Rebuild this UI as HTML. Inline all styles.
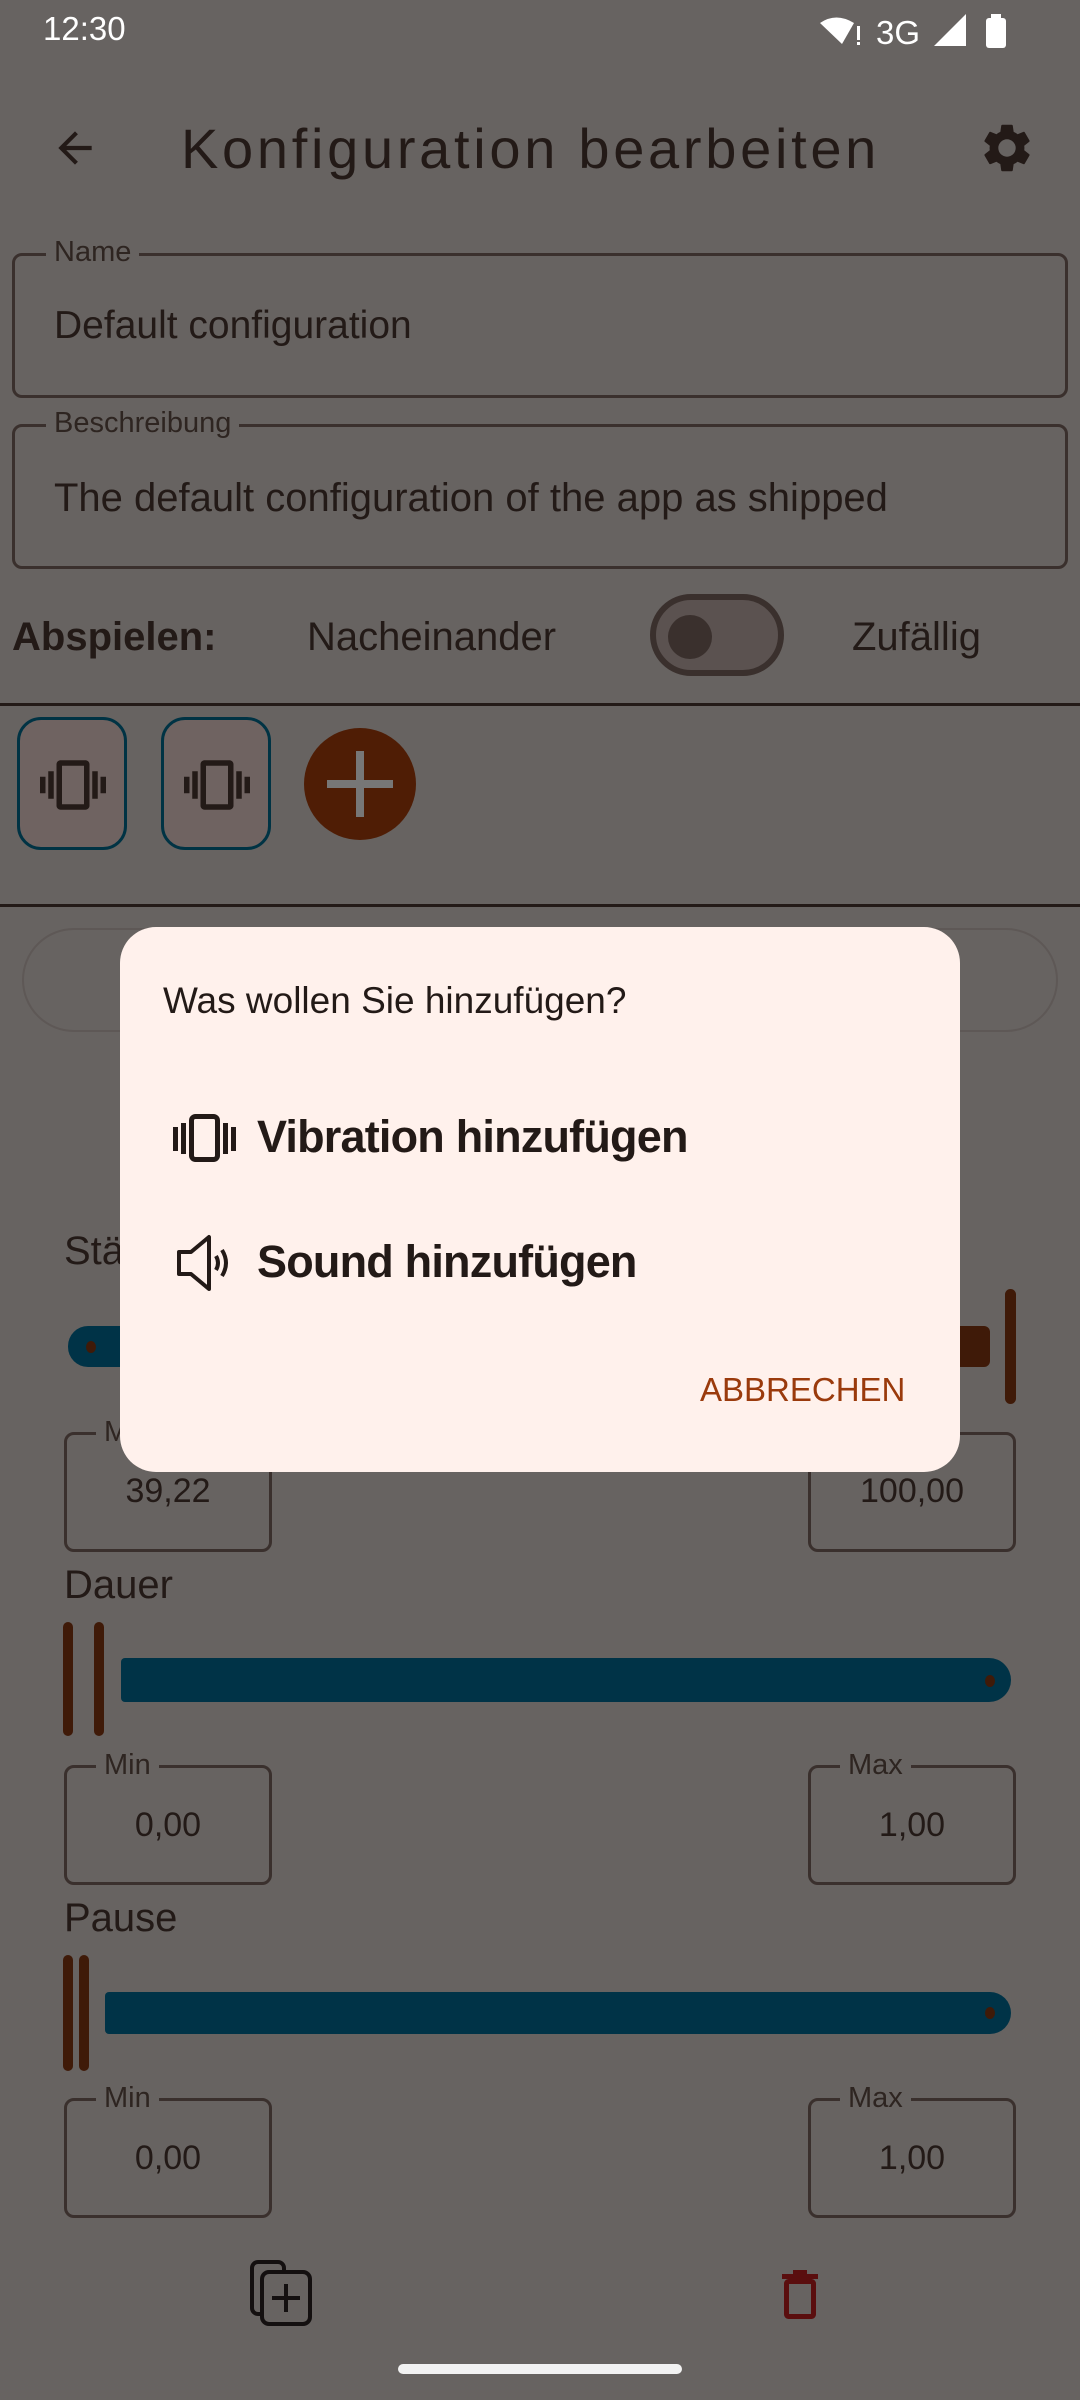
<!DOCTYPE html>
<html><head><meta charset="utf-8"><style>
*{margin:0;padding:0;box-sizing:border-box}
body{width:1080px;height:2400px;background:#676361;position:relative;overflow:hidden;font-family:"Liberation Sans",sans-serif;color:#231a17}
.a{position:absolute;white-space:nowrap}
.box{position:absolute;border:3px solid #3a302d;border-radius:10px}
.lbl{position:absolute;background:#676361;padding:0 8px;font-size:29px;color:#2e2521;line-height:34px}
.bar{position:absolute;background:#3f1a08;border-radius:6px}
.trk{position:absolute;background:#003347}
</style></head><body>
<div class="a" style="left:43px;top:10px;font-size:33px;color:#fff">12:30</div>
<svg class="a" style="left:818px;top:14px" width="200" height="34" viewBox="0 0 200 34">
<path d="M2 9 Q18 -2 36 9 L24 30 Z" fill="#fff"/><rect x="39" y="12" width="3" height="14" fill="#fff"/><rect x="39" y="28" width="3" height="3" fill="#fff"/>
<text x="58" y="30" font-size="33" fill="#fff" font-family="Liberation Sans">3G</text>
<path d="M116 32 L148 32 L148 0 Z" fill="#fff"/>
<rect x="168" y="4" width="20" height="30" rx="3" fill="#fff"/><rect x="173" y="0" width="10" height="5" fill="#fff"/>
</svg>
<svg class="a" style="left:50px;top:123px" width="50" height="50" viewBox="0 0 24 24"><path d="M20 11H7.8l5.6-5.6L12 4l-8 8 8 8 1.4-1.4L7.8 13H20z" fill="#231a17"/></svg>
<div class="a" style="left:181px;top:114px;font-size:56px;line-height:70px;color:#231a17;letter-spacing:3.7px">Konfiguration bearbeiten</div>
<svg class="a" style="left:978px;top:119px" width="58" height="58" viewBox="0 0 24 24"><path fill="#231a17" d="M19.14 12.94c.04-.3.06-.61.06-.94 0-.32-.02-.64-.07-.94l2.03-1.58a.49.49 0 00.12-.61l-1.920-3.32a.49.49 0 00-.59-.22l-2.39.96c-.5-.38-1.030-.7-1.62-.94l-.36-2.54a.48.48 0 00-.48-.41h-3.84a.48.48 0 00-.47.41l-.36 2.54c-.59.24-1.13.57-1.62.94l-2.39-.96a.48.48 0 00-.59.22L2.74 8.87a.47.47 0 00.12.61l2.03 1.58c-.05.3-.09.63-.09.94s.02.64.07.94l-2.03 1.58a.49.49 0 00-.12.61l1.92 3.32c.12.22.37.29.59.22l2.39-.96c.5.38 1.03.7 1.62.94l.36 2.54c.05.24.24.41.48.41h3.84c.24 0 .44-.17.47-.41l.36-2.54c.59-.24 1.13-.56 1.62-.94l2.39.96c.22.08.47 0 .59-.22l1.92-3.32a.47.47 0 00-.12-.61l-2.01-1.58zM12 15.6A3.6 3.6 0 1112 8.4a3.6 3.6 0 010 7.2z"/></svg>

<div class="box" style="left:12px;top:253px;width:1056px;height:145px"></div>
<div class="lbl" style="left:46px;top:235px">Name</div>
<div class="a" style="left:54px;top:301px;font-size:39px;line-height:50px">Default configuration</div>
<div class="box" style="left:12px;top:424px;width:1056px;height:145px"></div>
<div class="lbl" style="left:46px;top:406px">Beschreibung</div>
<div class="a" style="left:54px;top:473px;font-size:40px;line-height:50px">The default configuration of the app as shipped</div>

<div class="a" style="left:12px;top:612px;font-size:40px;line-height:50px;font-weight:bold">Abspielen:</div>
<div class="a" style="left:307px;top:612px;font-size:40px;line-height:50px">Nacheinander</div>
<div class="a" style="left:650px;top:594px;width:134px;height:82px;border:6px solid #3a302d;border-radius:41px;background:#5b5250"></div>
<div class="a" style="left:668px;top:615px;width:44px;height:44px;border-radius:50%;background:#3a302d"></div>
<div class="a" style="left:852px;top:612px;font-size:40px;line-height:50px">Zufällig</div>

<div class="a" style="left:0;top:703px;width:1080px;height:3px;background:#231a17"></div>
<div class="a" style="left:17px;top:717px;width:110px;height:133px;border:3px solid #003344;border-radius:24px;background:#6f6361"></div>
<div class="a" style="left:161px;top:717px;width:110px;height:133px;border:3px solid #003344;border-radius:24px;background:#6f6361"></div>
<svg class="a" style="left:40px;top:752px" width="66" height="66" viewBox="0 0 24 24"><path fill="#231a17" d="M0 15h2V9H0v6zm3 2h2V7H3v10zm19-8v6h2V9h-2zm-3 8h2V7h-2v10zM16.5 3h-9C6.67 3 6 3.670 6 4.5v15c0 .83.67 1.5 1.5 1.5h9c.83 0 1.5-.67 1.5-1.5v-15c0-.83-.67-1.5-1.5-1.5zM16 19H8V5h8v14z"/></svg>
<svg class="a" style="left:184px;top:752px" width="66" height="66" viewBox="0 0 24 24"><path fill="#231a17" d="M0 15h2V9H0v6zm3 2h2V7H3v10zm19-8v6h2V9h-2zm-3 8h2V7h-2v10zM16.5 3h-9C6.67 3 6 3.670 6 4.5v15c0 .83.67 1.5 1.5 1.5h9c.83 0 1.5-.67 1.5-1.5v-15c0-.83-.67-1.5-1.5-1.5zM16 19H8V5h8v14z"/></svg>
<div class="a" style="left:304px;top:728px;width:112px;height:112px;border-radius:50%;background:#4f1d05"></div>
<div class="a" style="left:327px;top:780px;width:66px;height:8px;background:#777"></div>
<div class="a" style="left:356px;top:751px;width:8px;height:66px;background:#777"></div>
<div class="a" style="left:0;top:904px;width:1080px;height:3px;background:#231a17"></div>
<div class="a" style="left:22px;top:928px;width:1036px;height:104px;border:2px solid #5e5856;border-radius:52px"></div>

<div class="a" style="left:64px;top:1226px;font-size:40px;line-height:50px">Stärke</div>
<div class="trk" style="left:68px;top:1326px;width:880px;height:41px;border-radius:20px 0 0 20px"></div>
<div class="a" style="left:86px;top:1341px;width:10px;height:12px;border-radius:50%;background:#3f1a08"></div>
<div class="a" style="left:930px;top:1326px;width:60px;height:41px;background:#3f1a08;border-radius:0 6px 6px 0"></div>
<div class="bar" style="left:1005px;top:1289px;width:11px;height:115px"></div>
<div class="box" style="left:64px;top:1432px;width:208px;height:120px"></div>
<div class="lbl" style="left:96px;top:1415px">Min</div>
<div class="a" style="left:64px;top:1472px;width:208px;text-align:center;font-size:34px">39,22</div>
<div class="box" style="left:808px;top:1432px;width:208px;height:120px"></div>
<div class="a" style="left:808px;top:1472px;width:208px;text-align:center;font-size:34px">100,00</div>

<div class="a" style="left:64px;top:1560px;font-size:40px;line-height:50px">Dauer</div>
<div class="bar" style="left:63px;top:1622px;width:10px;height:114px"></div>
<div class="bar" style="left:94px;top:1622px;width:10px;height:114px"></div>
<div class="trk" style="left:121px;top:1658px;width:890px;height:44px;border-radius:4px 22px 22px 4px"></div>
<div class="a" style="left:985px;top:1675px;width:10px;height:12px;border-radius:50%;background:#3f1a08"></div>
<div class="box" style="left:64px;top:1765px;width:208px;height:120px"></div>
<div class="lbl" style="left:96px;top:1748px">Min</div>
<div class="a" style="left:64px;top:1806px;width:208px;text-align:center;font-size:34px">0,00</div>
<div class="box" style="left:808px;top:1765px;width:208px;height:120px"></div>
<div class="lbl" style="left:840px;top:1748px">Max</div>
<div class="a" style="left:808px;top:1806px;width:208px;text-align:center;font-size:34px">1,00</div>

<div class="a" style="left:64px;top:1893px;font-size:40px;line-height:50px">Pause</div>
<div class="bar" style="left:63px;top:1955px;width:10px;height:116px"></div>
<div class="bar" style="left:79px;top:1955px;width:10px;height:116px"></div>
<div class="trk" style="left:105px;top:1992px;width:906px;height:42px;border-radius:4px 21px 21px 4px"></div>
<div class="a" style="left:985px;top:2007px;width:10px;height:12px;border-radius:50%;background:#3f1a08"></div>
<div class="box" style="left:64px;top:2098px;width:208px;height:120px"></div>
<div class="lbl" style="left:96px;top:2081px">Min</div>
<div class="a" style="left:64px;top:2139px;width:208px;text-align:center;font-size:34px">0,00</div>
<div class="box" style="left:808px;top:2098px;width:208px;height:120px"></div>
<div class="lbl" style="left:840px;top:2081px">Max</div>
<div class="a" style="left:808px;top:2139px;width:208px;text-align:center;font-size:34px">1,00</div>

<svg class="a" style="left:248px;top:2260px" width="66" height="68" viewBox="0 0 66 68"><path d="M14 54 H10 a6 6 0 0 1 -6 -6 V8 a6 6 0 0 1 6 -6 H30 a6 6 0 0 1 6 6 V12" fill="none" stroke="#141010" stroke-width="4"/><rect x="14" y="12" width="48" height="52" rx="7" fill="none" stroke="#141010" stroke-width="4"/><path d="M38 24 V52 M24 38 H52" stroke="#141010" stroke-width="4"/></svg>
<svg class="a" style="left:780px;top:2268px" width="40" height="52" viewBox="0 0 40 52"><rect x="2" y="6" width="36" height="5" fill="#5a0e0e"/><rect x="13" y="2" width="14" height="5" fill="#5a0e0e"/><rect x="6.5" y="13.5" width="27" height="35" rx="2" fill="none" stroke="#5a0e0e" stroke-width="5"/></svg>
<div class="a" style="left:398px;top:2364px;width:284px;height:10px;border-radius:5px;background:#f2f2f2"></div>

<div class="a" style="left:120px;top:927px;width:840px;height:545px;background:#fff1ec;border-radius:36px"></div>
<div class="a" style="left:163px;top:978px;font-size:37px;line-height:46px;color:#231a17">Was wollen Sie hinzufügen?</div>
<svg class="a" style="left:170px;top:1110px" width="68" height="56" viewBox="0 0 68 56"><rect x="21.5" y="6.5" width="26" height="43" rx="4" fill="none" stroke="#231a17" stroke-width="5"/><rect x="3" y="17" width="5" height="24" fill="#231a17"/><rect x="11" y="13" width="5" height="31" fill="#231a17"/><rect x="53" y="13" width="5" height="31" fill="#231a17"/><rect x="61" y="17" width="5" height="24" fill="#231a17"/></svg>
<div class="a" style="left:257px;top:1109px;font-size:45px;line-height:56px;font-weight:bold;color:#231a17;letter-spacing:-0.8px">Vibration hinzufügen</div>
<svg class="a" style="left:174px;top:1234px" width="60" height="58" viewBox="0 0 60 58"><path d="M5 18 H17 L35 3 V55 L17 40 H5 Z" fill="none" stroke="#231a17" stroke-width="4" stroke-linejoin="round"/><path d="M42 22 Q46 29 42 36" fill="none" stroke="#231a17" stroke-width="4"/><path d="M48 16 Q56 29 48 42" fill="none" stroke="#231a17" stroke-width="4"/></svg>
<div class="a" style="left:257px;top:1234px;font-size:45px;line-height:56px;font-weight:bold;color:#231a17;letter-spacing:-0.8px">Sound hinzufügen</div>
<div class="a" style="left:700px;top:1370px;font-size:33px;line-height:40px;color:#9a3a0c">ABBRECHEN</div>
</body></html>
